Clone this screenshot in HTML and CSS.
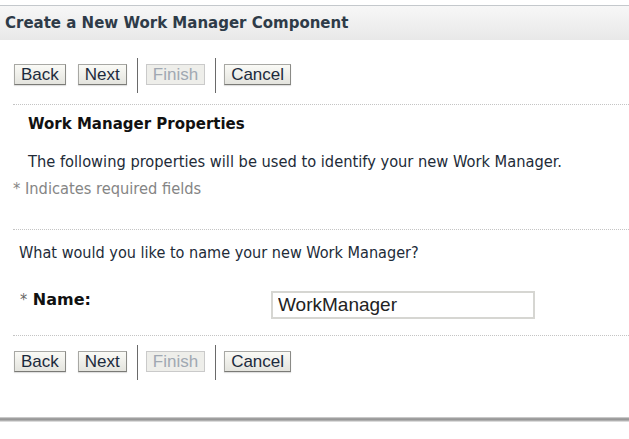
FILE: index.html
```html
<!DOCTYPE html>
<html>
<head>
<meta charset="utf-8">
<link rel="stylesheet" href="styles.css">
</head>
<body>
<div class="panel">
  <div class="header">Create a New Work Manager Component</div>
  <div class="content">
    <div class="btnrow">
      <button class="btn">Back</button>
      <button class="btn btn-next">Next</button>
      <span class="sep"></span>
      <button class="btn disabled">Finish</button>
      <span class="sep"></span>
      <button class="btn">Cancel</button>
    </div>
    <div class="rule rule-top"></div>
    <h2 class="section-title">Work Manager Properties</h2>
    <p class="intro">The following properties will be used to identify your new Work Manager.</p>
    <p class="required-note">* Indicates required fields</p>
    <div class="rule rule-mid"></div>
    <p class="question">What would you like to name your new Work Manager?</p>
    <div class="field">
      <label class="field-label"><span class="star">*</span> Name:</label>
      <input class="field-input" type="text" value="WorkManager">
    </div>
    <div class="rule rule-low"></div>
    <div class="btnrow btnrow-bottom">
      <button class="btn">Back</button>
      <button class="btn btn-next">Next</button>
      <span class="sep"></span>
      <button class="btn disabled">Finish</button>
      <span class="sep"></span>
      <button class="btn">Cancel</button>
    </div>
  </div>
  <div class="shadow"></div>
</div>
</body>
</html>
```
FILE: styles.css
```css
html, body {
  margin: 0;
  padding: 0;
  background: #ffffff;
}
body {
  width: 629px;
  height: 439px;
  overflow: hidden;
  font-family: "DejaVu Sans Condensed", "DejaVu Sans", sans-serif;
  color: #222b38;
}
.panel {
  padding-top: 5px;
}
.header {
  box-sizing: border-box;
  height: 35px;
  border-top: 1px solid #c4c8cc;
  background: linear-gradient(#f7f7f7, #e8e8e8);
  font-family: "DejaVu Sans", sans-serif;
  font-weight: bold;
  font-size: 15px;
  color: #2e3b48;
  padding-left: 5px;
  display: flex;
  align-items: center;
}
.content {
  padding-left: 13px;
}
.btnrow {
  display: flex;
  align-items: center;
  height: 35px;
  margin-top: 18px;
}
.btn {
  font-family: "Liberation Sans", Arial, sans-serif;
  font-size: 17px;
  line-height: 19px;
  color: #1c2a3c;
  height: 21px;
  padding: 0 6px;
  margin: -2px 0 0 1px;
  border: 1px solid #a8a8a4;
  border-right-color: #8a8a86;
  border-bottom-color: #7a7a76;
  background: linear-gradient(#fafaf6, #e4e4de);
  border-radius: 0;
  box-shadow: 0 1px 1px rgba(0,0,0,0.12);
}
.btn-next {
  margin-left: 12px;
}
.btn.disabled {
  color: #a0a8b2;
  border-color: #cacaca;
  background: #eeeeea;
  box-shadow: none;
}
.sep {
  width: 1px;
  height: 35px;
  background: #6a6a6a;
  margin: 0 7px 0 10px;
}
.rule {
  border-top: 1px dotted #c4c4c4;
}
.rule-top {
  margin-top: 11px;
}
.section-title {
  margin: 9px 0 0 15px;
  font-family: "DejaVu Sans", sans-serif;
  font-size: 15px;
  line-height: 20px;
  font-weight: bold;
  color: #111;
}
.intro {
  margin: 18px 0 0 15px;
  font-size: 16.3px;
  line-height: 20px;
}
.required-note {
  margin: 7px 0 0 0;
  font-size: 16.3px;
  line-height: 20px;
  color: #858585;
}
.rule-mid {
  margin-top: 30px;
}
.question {
  margin: 13px 0 0 6px;
  font-size: 16.1px;
  line-height: 20px;
}
.field {
  display: flex;
  align-items: flex-start;
  margin: 27px 0 0 7px;
}
.field-label {
  width: 251px;
  font-family: "DejaVu Sans", sans-serif;
  font-size: 16px;
  line-height: 20px;
  font-weight: bold;
  color: #111;
}
.star {
  font-family: "DejaVu Sans Condensed", sans-serif;
  font-weight: normal;
  color: #666;
}
.field-input {
  margin-top: 1px;
  width: 264px;
  height: 28px;
  box-sizing: border-box;
  border: 2px solid #d6d6d2;
  padding: 0 5px;
  font-family: "Liberation Sans", Arial, sans-serif;
  font-size: 19px;
  color: #222;
  outline: none;
}
.rule-low {
  margin-top: 16px;
}
.btnrow-bottom {
  margin-top: 9px;
}
.shadow {
  margin-top: 37px;
  height: 5px;
  background: linear-gradient(#dcdcdc, #8c8c8c 40%, #b0b0b0 70%, #f0f0f0);
}
```
